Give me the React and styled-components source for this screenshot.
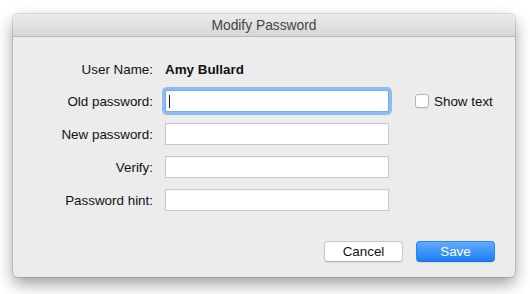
import React from 'react';
import styled, { createGlobalStyle } from 'styled-components';

const Global = createGlobalStyle`
  html, body {
    margin: 0;
    padding: 0;
    background: #ffffff;
  }
  body {
    font-family: "Liberation Sans", Arial, sans-serif;
    font-size: 13.4px;
    color: #111111;
  }
`;

const fields = [
  { label: 'Old password:', focused: true },
  { label: 'New password:' },
  { label: 'Verify:' },
  { label: 'Password hint:' },
];

const App = () => {
  return (
    <>
      <Global />
      <Page>
        <Window>
          <TitleBar>Modify Password</TitleBar>
          <Body>
            <Form>
              <Label>User Name:</Label>
              <UserName>Amy Bullard</UserName>
              <span />
              {fields.map((f) => (
                <React.Fragment key={f.label}>
                  <Label>{f.label}</Label>
                  <FieldWrap>
                    <Field readOnly focused={f.focused} />
                    {f.focused && <Caret />}
                  </FieldWrap>
                  {f.focused ? (
                    <CheckRow>
                      <CheckBox />
                      <span>Show text</span>
                    </CheckRow>
                  ) : (
                    <span />
                  )}
                </React.Fragment>
              ))}
            </Form>
            <Buttons>
              <Button>Cancel</Button>
              <Button primary>Save</Button>
            </Buttons>
          </Body>
        </Window>
      </Page>
    </>
  );
};

export default App;

const Page = styled.div`
  width: 530px;
  height: 294px;
  padding: 14px 15px 0 13px;
  box-sizing: border-box;
`;

const Window = styled.div`
  width: 502px;
  height: 263px;
  border-radius: 5px;
  background: #ececec;
  overflow: hidden;
  display: flex;
  flex-direction: column;
  box-shadow: 0 0 0 1px rgba(0, 0, 0, 0.12), 0 7px 16px rgba(0, 0, 0, 0.38);
`;

const TitleBar = styled.div`
  height: 22px;
  flex: none;
  display: flex;
  align-items: center;
  justify-content: center;
  background: linear-gradient(#ececec, #d6d6d6);
  border-bottom: 1px solid #b9b9b9;
  color: #454545;
  font-size: 13.8px;
`;

const Body = styled.div`
  flex: 1;
  display: flex;
  flex-direction: column;
  padding: 22px 20px 0 0;
`;

const Form = styled.div`
  display: grid;
  grid-template-columns: 140px 224px auto;
  grid-template-rows: 20px repeat(4, 22px);
  column-gap: 12px;
  row-gap: 11px;
  align-items: center;
`;

const Label = styled.div`
  text-align: right;
  white-space: nowrap;
`;

const UserName = styled.div`
  font-weight: bold;
`;

const FieldWrap = styled.div`
  position: relative;
  height: 22px;
`;

const Field = styled.input`
  box-sizing: border-box;
  width: 224px;
  height: 22px;
  margin: 0;
  border: 1px solid #c9c9c9;
  border-top-color: #bdbdbd;
  background: #ffffff;
  outline: none;
  box-shadow: ${(p) =>
    p.focused ? '0 0 0 3px #8ebcf0' : 'inset 0 1px 0 rgba(0,0,0,0.04)'};
  border-color: ${(p) => (p.focused ? '#7aa8e0' : '#c9c9c9')};
  border-radius: ${(p) => (p.focused ? '2px' : '0')};
`;

const Caret = styled.span`
  position: absolute;
  left: 4px;
  top: 5px;
  width: 1px;
  height: 13px;
  background: #1b1b1b;
`;

const CheckRow = styled.label`
  display: flex;
  align-items: center;
  gap: 5px;
  margin-left: 14px;
  white-space: nowrap;
`;

const CheckBox = styled.span`
  box-sizing: border-box;
  width: 14px;
  height: 14px;
  border: 1px solid #b4b4b4;
  border-radius: 3px;
  background: #ffffff;
  box-shadow: 0 1px 0 rgba(0, 0, 0, 0.06);
`;

const Buttons = styled.div`
  display: flex;
  justify-content: flex-end;
  gap: 13px;
  margin-top: 30px;
`;

const Button = styled.button`
  box-sizing: border-box;
  width: 79px;
  height: 21px;
  padding: 0;
  font-family: "Liberation Sans", Arial, sans-serif;
  font-size: 13.4px;
  border-radius: 4px;
  color: ${(p) => (p.primary ? '#ffffff' : '#111111')};
  background: ${(p) =>
    p.primary ? 'linear-gradient(#62abfb, #1b7ef9)' : '#ffffff'};
  border: 1px solid ${(p) => (p.primary ? '#2b85f2' : '#c8c8c8')};
  border-bottom-color: ${(p) => (p.primary ? '#1a6fd8' : '#b3b3b3')};
  box-shadow: 0 1px 1px rgba(0, 0, 0, 0.08);
`;
